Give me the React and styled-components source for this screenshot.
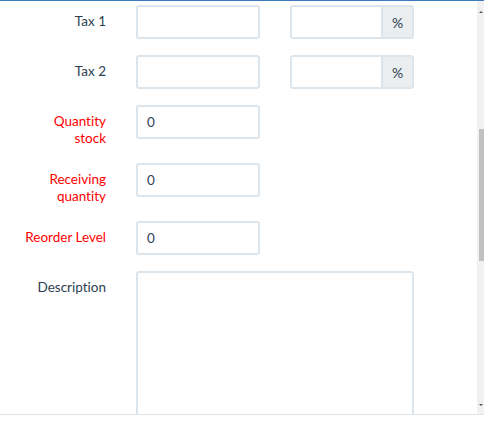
import React from 'react'
import styled, { createGlobalStyle } from 'styled-components'

const GlobalStyle = createGlobalStyle`
    body {
        margin: 0;
        background: #ffffff;
        font-family: "Lato", "Liberation Sans", sans-serif;
        font-variant-ligatures: none;
    }
`

const Frame = styled.div`
    width: 484px;
    height: 415px;
    box-sizing: border-box;
    border-top: 1px solid #3c7bbd;
    border-bottom: 1px solid #e3e3e3;
    display: flex;
    overflow: hidden;
`

const Body = styled.div`
    flex: 1;
    padding-top: 4px;
    overflow: hidden;
`

const Track = styled.div`
    width: 7px;
    background: #f1f1f1;
    display: flex;
    flex-direction: column;
    align-items: flex-end;
`

const Arrow = styled.div`
    width: 0;
    height: 0;
    margin: ${p => (p.$down ? 'auto 1px 8px 0' : '10px 1px 0 0')};
    border-left: 2px solid transparent;
    border-right: 2px solid transparent;
    border-${p => (p.$down ? 'top' : 'bottom')}: 2px solid #505050;
`

const Thumb = styled.div`
    width: 5px;
    height: 132px;
    margin-top: 116px;
    background: #c1c1c1;
`

const Row = styled.div`
    display: flex;
    align-items: flex-start;
    margin-bottom: 16px;
`

const Label = styled.label`
    width: 106px;
    margin-right: 30px;
    padding-top: 8px;
    text-align: right;
    font-size: 13.5px;
    line-height: 17px;
    color: ${p => (p.$required ? '#ff0000' : '#2c3e50')};
`

const Fields = styled.div`
    display: flex;
    gap: 30px;
`

const Input = styled.input`
    width: 124px;
    height: 34px;
    box-sizing: border-box;
    border: 2px solid #dde5ec;
    border-radius: 3px;
    padding: 0 9px;
    font-family: "Lato", "Liberation Sans", sans-serif;
    font-size: 13.5px;
    color: #2f4256;
    outline: none;
    ${p => p.$grouped && `
        width: auto;
        flex: 1;
        min-width: 0;
        border-radius: 3px 0 0 3px;
    `}
`

const Group = styled.div`
    width: 124px;
    display: flex;
`

const Addon = styled.span`
    width: 31px;
    height: 34px;
    box-sizing: border-box;
    display: flex;
    align-items: center;
    justify-content: center;
    background: #ebeef0;
    border: 2px solid #dde5ec;
    border-left: 0;
    border-radius: 0 3px 3px 0;
    font-size: 14px;
    color: #2c3e50;
`

const TextArea = styled.textarea`
    width: 278px;
    height: 170px;
    box-sizing: border-box;
    border: 2px solid #dde5ec;
    border-radius: 3px;
    resize: none;
    outline: none;
`

const TaxRow = ({ label }) => (
    <Row>
        <Label>{label}</Label>
        <Fields>
            <Input />
            <Group>
                <Input $grouped />
                <Addon>%</Addon>
            </Group>
        </Fields>
    </Row>
)

const NumberRow = ({ children }) => (
    <Row>
        <Label $required>{children}</Label>
        <Input defaultValue="0" />
    </Row>
)

export default function App() {
    return (
        <>
            <GlobalStyle />
            <Frame>
                <Body>
                    <TaxRow label="Tax 1" />
                    <TaxRow label="Tax 2" />
                    <NumberRow>Quantity<br />stock</NumberRow>
                    <NumberRow>Receiving<br />quantity</NumberRow>
                    <NumberRow>Reorder Level</NumberRow>
                    <Row>
                        <Label>Description</Label>
                        <TextArea />
                    </Row>
                </Body>
                <Track>
                    <Arrow />
                    <Thumb />
                    <Arrow $down />
                </Track>
            </Frame>
        </>
    )
}
